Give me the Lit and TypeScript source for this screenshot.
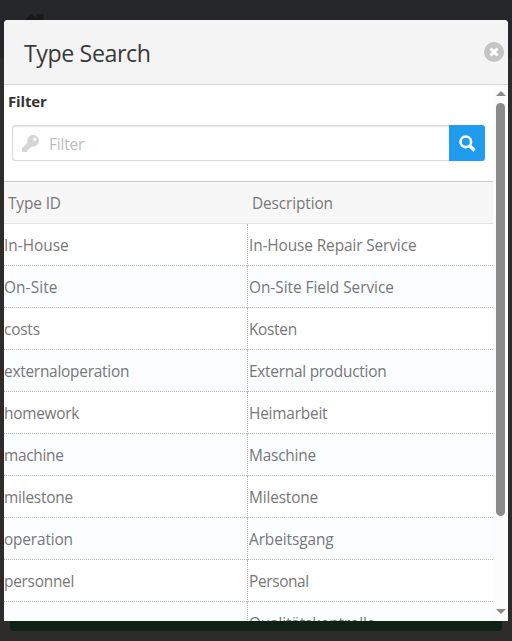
import { LitElement, html, css } from "lit";
import { customElement } from "lit/decorators.js";
import { styleMap } from "lit/directives/style-map.js";

type Row = { id: string; idSpacing: number; text: string; textSpacing: number };

const ROWS: Row[] = [
  { id: "In-House", idSpacing: 0, text: "In-House Repair Service", textSpacing: -0.11 },
  { id: "On-Site", idSpacing: 0.1, text: "On-Site Field Service", textSpacing: -0.03 },
  { id: "costs", idSpacing: -0.2, text: "Kosten", textSpacing: -0.3 },
  { id: "externaloperation", idSpacing: -0.24, text: "External production", textSpacing: -0.25 },
  { id: "homework", idSpacing: -0.25, text: "Heimarbeit", textSpacing: -0.2 },
  { id: "machine", idSpacing: -0.28, text: "Maschine", textSpacing: -0.2 },
  { id: "milestone", idSpacing: -0.2, text: "Milestone", textSpacing: -0.15 },
  { id: "operation", idSpacing: -0.15, text: "Arbeitsgang", textSpacing: -0.08 },
  { id: "personnel", idSpacing: -0.25, text: "Personal", textSpacing: -0.35 },
  { id: "", idSpacing: 0, text: "Qualitätskontrolle", textSpacing: -0.15 },
];

@customElement("app-root")
export class AppRoot extends LitElement {
  static styles = css`
    :host {
      display: block;
      position: relative;
      box-sizing: border-box;
      width: 512px;
      height: 641px;
      padding: 20px 4px;
      overflow: hidden;
      background: linear-gradient(#26272b 0 58px, #2d2c2b 58px);
      font-family: "Open Sans", "Noto Sans", sans-serif;
      font-size: 15.4px;
      color: #777;
    }
    * { box-sizing: border-box; }
    .home { position: absolute; left: 23px; top: 13px; width: 24px; height: 20px; fill: #18191b; }
    .page-foot {
      position: absolute; left: 10px; top: 600px; width: 492px; height: 31px;
      background: #102115; border-radius: 0 0 4px 4px;
    }
    .modal {
      position: relative; display: flex; flex-direction: column; height: 601px;
      background: #fff; border-radius: 4px 4px 0 0; overflow: hidden;
    }
    .head {
      display: flex; align-items: center; justify-content: space-between; flex: none;
      height: 65px; padding: 0 4px 0 20px; background: #f4f4f4; border-bottom: 1px solid #d9d9d9;
    }
    .title { font-size: 23.2px; line-height: 32px; letter-spacing: -0.4px; color: #3a3a3a; padding-top: 1px; font-weight: 400; margin: 0; }
    .close { width: 20px; height: 20px; display: block; }
    .body { display: flex; flex: 1; min-height: 0; }
    .content { flex: 1; overflow: hidden; }
    .label { height: 40px; padding: 4px 0 0 4px; line-height: 24px; font-size: 15px; letter-spacing: -0.15px; font-weight: 700; color: #333; }
    .search { display: flex; height: 36px; margin: 0 8px 20px; }
    .field {
      display: flex; align-items: center; flex: 1; padding-left: 9px;
      border: 1px solid #d9d9d9; border-right: 0; border-radius: 3px 0 0 3px;
      box-shadow: inset 0 1px 2px #0000001a; color: #bdbdbd;
    }
    .field span { padding-top: 2px; letter-spacing: -0.15px; }
    .key { width: 17px; height: 17px; margin-right: 10px; fill: #d6d6d6; }
    .go {
      display: flex; align-items: center; justify-content: center; width: 36px;
      background: #209cee; border-radius: 0 3px 3px 0;
    }
    .go svg { width: 17px; height: 17px; fill: none; stroke: #fff; }
    .row { display: grid; grid-template-columns: 244px 245px; height: 42px; line-height: 43px; border-bottom: 1px dotted #bbb; white-space: nowrap; }
    .row:nth-child(odd) { background: #fbfdff; }
    .row.header { height: 43px; line-height: 44px; background: #f7f7f7; border-top: 1px solid #ccc; border-bottom: 1px solid #e2e2e2; }
    .header span { padding-left: 4px; letter-spacing: -0.12px; }
    .desc { height: 42px; margin-left: -1px; border-left: 1px dotted #bbb; padding-left: 1px; }
    .bar { width: 15px; flex: none; display: flex; flex-direction: column; align-items: center; background: #fcfcfc; }
    .up, .down { width: 10px; height: 5px; fill: #8b8b8b; }
    .up { margin-top: 6px; }
    .down { margin-top: auto; margin-bottom: 7px; }
    .thumb { width: 9px; height: 413px; margin-top: 7px; border-radius: 5px; background: #8b8b8b; }
  `;

  private spaced(text: string, spacing: number) {
    return html`<span style=${styleMap({ letterSpacing: `${spacing}px` })}>${text}</span>`;
  }

  render() {
    return html`
      <svg class="home" viewBox="0 0 24 20"><path d="M0 9 8.500 .8 13.500 5V1h7v12H0z" /></svg>
      <div class="page-foot"></div>
      <div class="modal">
        <div class="head">
          <h1 class="title">Type Search</h1>
          <svg class="close" viewBox="0 0 20 20">
            <circle cx="10" cy="10" r="10" fill="#c4c4c4" />
            <path d="M6.500 6.500l7 7M13.500 6.500l-7 7" stroke="#fff" stroke-width="3" />
          </svg>
        </div>
        <div class="body">
          <div class="content">
            <div class="label">Filter</div>
            <div class="search">
              <div class="field">
                <svg class="key" viewBox="0 0 512 512"><path d="M512 176.001C512 273.203 433.202 352 336 352c-11.220 0-22.190-1.062-32.827-3.069l-24.012 27.014A23.999 23.999 0 0 1 261.223 384H224v40c0 13.255-10.745 24-24 24h-40v40c0 13.255-10.745 24-24 24H24c-13.255 0-24-10.745-24-24v-78.059c0-6.365 2.529-12.470 7.029-16.971l161.802-161.802C163.108 213.814 160 195.271 160 176 160 78.798 238.797.001 335.999 0 433.488-.001 512 78.511 512 176.001zM336 128c0 26.510 21.490 48 48 48s48-21.490 48-48-21.490-48-48-48-48 21.490-48 48z" /></svg>
                <span>Filter</span>
              </div>
              <div class="go">
                <svg viewBox="0 0 17 17"><circle cx="6.8" cy="6.8" r="5.300" stroke-width="2.600" /><path d="M10.500 10.500l5 5" stroke-width="3.200" /></svg>
              </div>
            </div>
            <div class="table">
              <div class="row header"><span>Type ID</span><span>Description</span></div>
              ${ROWS.map(
                (r) => html`<div class="row">
                  <div>${this.spaced(r.id, r.idSpacing)}</div>
                  <div class="desc">${this.spaced(r.text, r.textSpacing)}</div>
                </div>`
              )}
            </div>
          </div>
          <div class="bar">
            <svg class="up" viewBox="0 0 10 5"><path d="M0 5 5 0l5 5z" /></svg>
            <div class="thumb"></div>
            <svg class="down" viewBox="0 0 10 5"><path d="M0 0h10L5 5z" /></svg>
          </div>
        </div>
      </div>
    `;
  }
}
